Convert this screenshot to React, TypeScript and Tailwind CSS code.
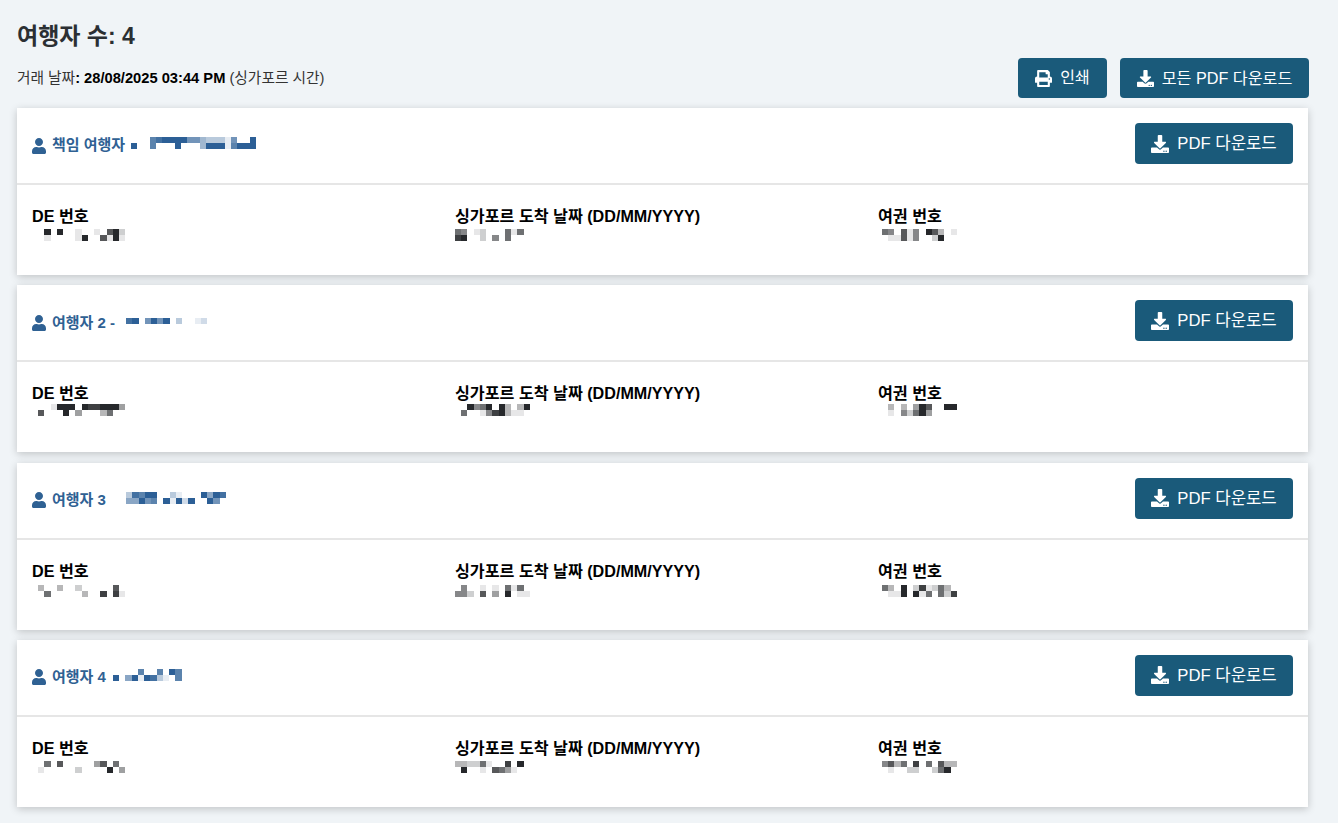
import { FaDownload, FaPrint, FaUser } from 'react-icons/fa'

const FONT = "font-['Liberation_Sans','Noto_Sans_CJK_KR',sans-serif]"
const CELL = 6.24

/** Redacted text in the screenshot: each row is a string of shades, 0 = empty, 9 = darkest. */
function Mosaic({ rows, color, className }: { rows: string[]; color: string; className?: string }) {
  const cols = rows[0].length
  return (
    <svg
      className={`block shrink-0 ${className ?? ''}`}
      width={cols * CELL}
      height={rows.length * 6.2}
      viewBox={`0 0 ${cols * CELL} ${rows.length * 6.2}`}
      shapeRendering="crispEdges"
    >
      {rows.map((row, y) =>
        row.split('').map((c, x) =>
          c === '0' ? null : (
            <rect key={`${x}-${y}`} x={x * CELL} y={y * 6.2} width={CELL} height={6.2} fill={color} fillOpacity={Number(c) / 9} />
          ),
        ),
      )}
    </svg>
  )
}

type Traveller = {
  name: string
  nameRows: string[]
  nameClass: string
  de: string[]
  date: string[]
  passport: string[]
  dataClass: string
}

const BLUE = '#2c5f96'
const GRAY = '#26282b'

const travellers: Traveller[] = [
  {
    name: '책임 여행자',
    nameRows: ['00078999966433316009', '90070009000499917999'],
    nameClass: 'ml-[6px] mb-[4px]',
    de: ['09090010010792', '01000019007191'],
    date: ['65012000616', '89002050600'],
    passport: ['650715097301', '011715002900'],
    dataClass: 'mt-[3px]',
  },
  {
    name: '여행자 2 -',
    nameRows: ['8906969030012'],
    nameClass: 'ml-[11px] mb-[3px]',
    de: ['00199909889994', '70009040003600'],
    date: ['009569093039', '060015893110'],
    passport: ['030304970099', '010526940000'],
    dataClass: 'mt-[1px]',
  },
  {
    name: '여행자 3',
    nameRows: ['3879900310009598', '5596709192900960'],
    nameClass: 'ml-[20px] mb-[3px]',
    de: ['30030020000070', '06000003008081'],
    date: ['050010106160', '552070409011'],
    passport: ['630902812630', '011909160628'],
    dataClass: 'mt-[4px]',
  },
  {
    name: '여행자 4',
    nameRows: ['00007007097', '90591983107'],
    nameClass: 'ml-[7px] mb-[5px]',
    de: ['06070000047060', '10000020000904'],
    date: ['33226100809', '09001076410'],
    passport: ['573608060733', '010022002690'],
    dataClass: 'mt-[3px]',
  },
]

function Field({ label, rows, dataClass }: { label: string; rows: string[]; dataClass: string }) {
  return (
    <div>
      <div className="text-[16.15px] font-bold leading-[19px] text-black">{label}</div>
      <Mosaic rows={rows} color={GRAY} className={dataClass} />
    </div>
  )
}

function TravellerCard({ t }: { t: Traveller }) {
  return (
    <section className="mb-[10.33px] ml-px w-[1291px] bg-white shadow-[0_2px_8px_rgba(0,0,0,0.2)]">
      <div className="flex h-[77px] items-center justify-between border-b-2 border-[#e6e6e6] px-[15px]">
        <div className="flex items-center text-[15px] font-bold text-[#2f6193]">
          <FaUser className="-ml-px mr-[5px] text-base" />
          {t.name}
          <Mosaic rows={t.nameRows} color={BLUE} className={t.nameClass} />
        </div>
        <button className="mb-[4px] flex h-[41px] w-[158px] items-center justify-center gap-2 rounded bg-[#1a5a7a] text-[16.7px] text-white">
          <FaDownload className="text-[18px]" />
          PDF 다운로드
        </button>
      </div>
      <div className="grid h-[90px] grid-cols-[423px_423px_1fr] pl-[15px] pt-[22px]">
        <Field label="DE 번호" rows={t.de} dataClass={`ml-[6px] ${t.dataClass}`} />
        <Field label="싱가포르 도착 날짜 (DD/MM/YYYY)" rows={t.date} dataClass={t.dataClass} />
        <Field label="여권 번호" rows={t.passport} dataClass={`ml-[4px] ${t.dataClass}`} />
      </div>
    </section>
  )
}

export default function App() {
  return (
    <div className={`min-h-[823px] bg-[#f0f4f7] pl-4 pt-5 ${FONT}`}>
      <div className="w-[1293px]">
        <h1 className="pl-px text-[23px] font-bold leading-[32px] text-[#2b2f33]">여행자 수: 4</h1>
        <div className="mt-[6px] mb-[10px] flex items-center justify-between">
          <p className="pl-px text-[14.7px] text-[#333]">
            거래 날짜<b className="text-black">: 28/08/2025 03:44 PM</b> (싱가포르 시간)
          </p>
          <div className="flex gap-[13px]">
            <button className="flex h-10 w-[89px] items-center justify-center gap-2 rounded bg-[#1a5a7a] text-base text-white">
              <FaPrint className="text-[17px]" />
              인쇄
            </button>
            <button className="flex h-10 w-[189px] items-center justify-center gap-2 rounded bg-[#1a5a7a] text-[16.2px] text-white">
              <FaDownload className="text-[17px]" />
              모든 PDF 다운로드
            </button>
          </div>
        </div>
        {travellers.map((t) => (
          <TravellerCard key={t.name} t={t} />
        ))}
      </div>
    </div>
  )
}
